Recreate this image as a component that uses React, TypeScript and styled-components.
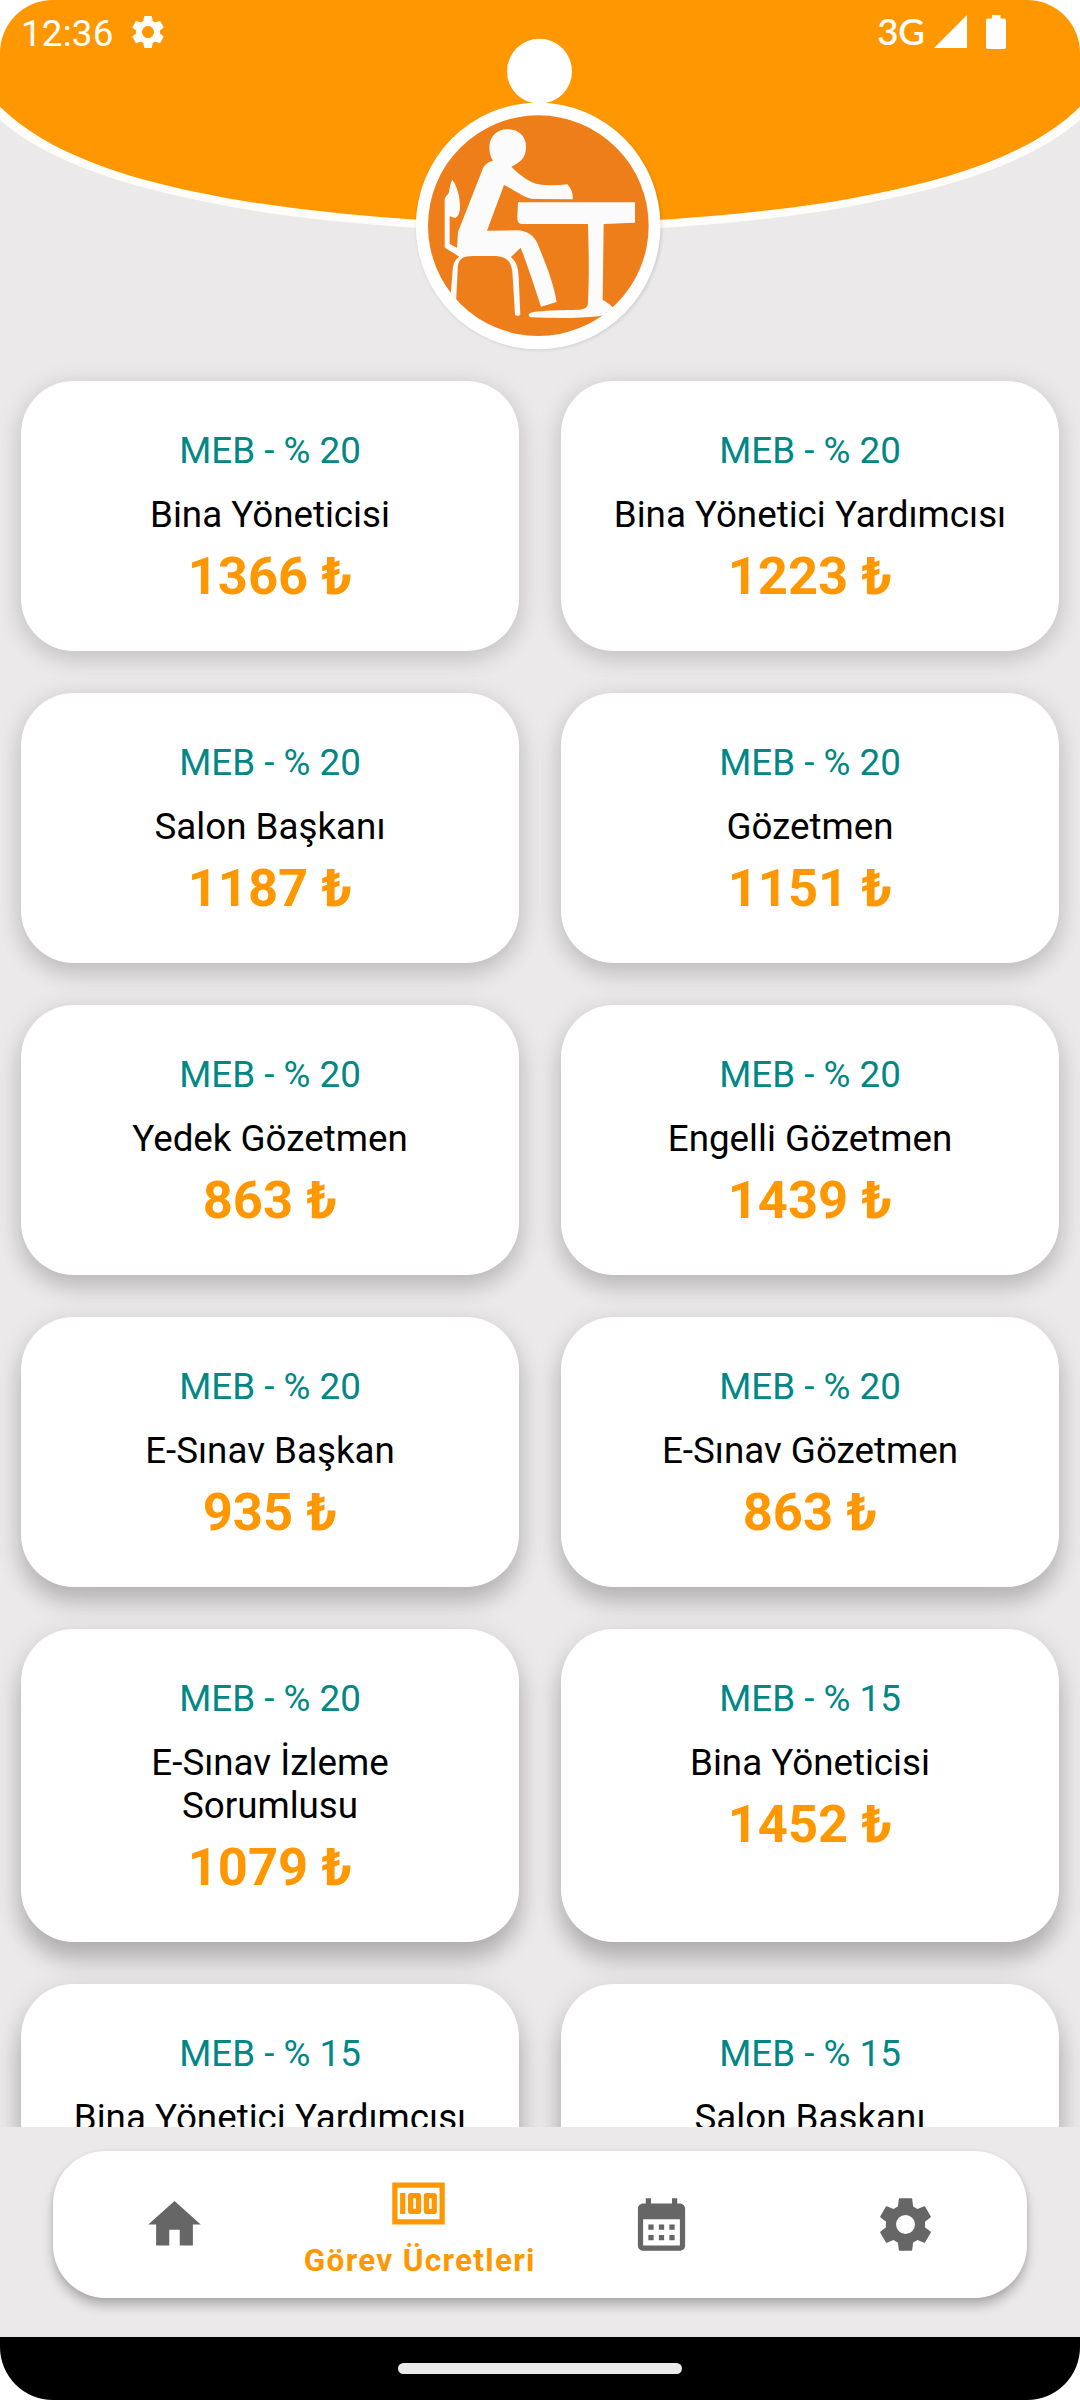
import React from "react";
import styled, { createGlobalStyle } from "styled-components";
import { MdCalendarMonth, MdHome, MdMoney, MdSettings } from "react-icons/md";

const ORANGE = "#ff9800";
const SURFACE = "#ebe9ea";

const GlobalStyle = createGlobalStyle`
  html, body { margin: 0; background: #fff; }
  * { box-sizing: border-box; }
`;

const Screen = styled.main`
  width: 1080px;
  height: 2400px;
  display: flex;
  flex-direction: column;
  overflow: hidden;
  border-radius: 53px;
  background: ${SURFACE};
  font-family: Roboto, "Noto Sans", sans-serif;
`;

const Header = styled.header`
  position: relative;
  flex: none;
  height: 350px;
`;

const HeaderArt = styled.svg`
  position: absolute;
  inset: 0;
  width: 1080px;
  height: 350px;
  overflow: visible;
`;

const StatusBar = styled.div`
  position: relative;
  display: flex;
  align-items: center;
  height: 64px;
  padding: 0 74px 0 21px;
  color: #fff;
`;

const Clock = styled.span`
  font-size: 36.75px;
  line-height: 43px;
  letter-spacing: 0.2px;
  margin-top: 2px;
`;

const StatusGear = styled(MdSettings)`
  width: 40px;
  height: 40px;
  margin-left: 14px;
`;

const StatusRight = styled.div`
  display: flex;
  align-items: center;
  margin-left: auto;
`;

const Network = styled.span`
  font-family: Lato, Roboto, sans-serif;
  font-size: 36.5px;
  font-weight: 500;
  line-height: 43px;
  margin: -2px 9px 0 0;
  -webkit-text-stroke: 0.2px currentColor;
`;

const StatusGlyph = styled.svg<{ $w: number; $gap?: number }>`
  width: ${(p) => p.$w}px;
  height: 34px;
  margin-right: ${(p) => p.$gap ?? 0}px;
  fill: currentColor;
`;

const List = styled.section`
  flex: 1;
  min-height: 0;
  overflow: hidden;
  display: grid;
  grid-template-columns: 1fr 1fr;
  grid-auto-rows: max-content;
  gap: 42px;
  padding: 31px 21px 0;
`;

const Card = styled.article<{ $row: number }>`
  display: flex;
  flex-direction: column;
  align-items: center;
  min-height: 270px;
  padding: 48px 48px 44px;
  border-radius: 52.5px;
  background: #fff;
  text-align: center;
  box-shadow:
    0 4px 28px rgba(0, 0, 0, 0.1),
    0 ${(p) => 8 + p.$row * 2.5}px 22px
      rgba(0, 0, 0, ${(p) => 0.1 + p.$row * 0.025});
`;

const Rate = styled.span`
  color: #018786;
  font-size: 36.75px;
  line-height: 43px;
`;

const Role = styled.span`
  margin-top: 21px;
  color: #000;
  font-size: 36.75px;
  line-height: 43px;
`;

const Price = styled.strong`
  margin-top: 9px;
  color: ${ORANGE};
  font-size: 52.5px;
  line-height: 62px;
  font-weight: 700;
`;

const Footer = styled.footer`
  flex: none;
  height: 210px;
  padding: 24px 53px 0;
`;

const TabBar = styled.nav`
  display: grid;
  grid-template-columns: repeat(4, 1fr);
  height: 147px;
  border-radius: 52.5px;
  background: #fff;
  box-shadow: 0 8px 11px rgba(0, 0, 0, 0.24), 0 1px 5px rgba(0, 0, 0, 0.08);
`;

const Tab = styled.button<{ $active?: boolean }>`
  display: flex;
  flex-direction: column;
  align-items: center;
  justify-content: center;
  padding: 0;
  border: 0;
  background: none;
  font-family: inherit;
  color: ${(p) => (p.$active ? ORANGE : "#666")};

  svg {
    width: 63px;
    height: 63px;
    flex: none;
  }
`;

const TabLabel = styled.span`
  margin: 7px 0 -2px;
  padding-left: 3px;
  font-size: 31.5px;
  line-height: 37px;
  font-weight: 700;
  letter-spacing: 1.3px;
  white-space: nowrap;
`;

const GestureBar = styled.div`
  flex: none;
  display: flex;
  align-items: center;
  justify-content: center;
  height: 63px;
  background: #000;
`;

const GesturePill = styled.div`
  width: 284px;
  height: 11px;
  border-radius: 6px;
  background: #ebebeb;
`;

type Fee = { rate: number; role: string; price?: number };

const fees: Fee[] = [
  { rate: 20, role: "Bina Yöneticisi", price: 1366 },
  { rate: 20, role: "Bina Yönetici Yardımcısı", price: 1223 },
  { rate: 20, role: "Salon Başkanı", price: 1187 },
  { rate: 20, role: "Gözetmen", price: 1151 },
  { rate: 20, role: "Yedek Gözetmen", price: 863 },
  { rate: 20, role: "Engelli Gözetmen", price: 1439 },
  { rate: 20, role: "E-Sınav Başkan", price: 935 },
  { rate: 20, role: "E-Sınav Gözetmen", price: 863 },
  { rate: 20, role: "E-Sınav İzleme Sorumlusu", price: 1079 },
  { rate: 15, role: "Bina Yöneticisi", price: 1452 },
  { rate: 15, role: "Bina Yönetici Yardımcısı" },
  { rate: 15, role: "Salon Başkanı" },
];

function Banner() {
  return (
    <HeaderArt viewBox="0 0 1080 350" aria-hidden>
      <defs>
        <clipPath id="badge">
          <circle cx="415" cy="617" r="332" />
        </clipPath>
        <filter id="soft" x="-10%" y="-10%" width="120%" height="120%">
          <feGaussianBlur stdDeviation="6" />
        </filter>
      </defs>
      {/* white rim, then the orange dome inside it */}
      <path
        fill="#fffdf9"
        d="M0 0V120C48 162 128 187 210 202.500C290 220 430 232 540 232C650 232 790 220 870 202.500C952 187 1032 162 1080 120V0Z"
      />
      <path
        fill={ORANGE}
        d="M0 0V106.700C48 154 128 179 210 194.700C290 211.500 430 224 540 224C650 224 790 211.500 870 194.700C952 179 1032 154 1080 106.700V0Z"
      />
      <g transform="translate(400 20) scale(.33333)">
        <circle cx="418.500" cy="154" r="97.500" fill="#fff" />
        <circle cx="418" cy="622" r="366" fill="#000" opacity=".16" filter="url(#soft)" />
        <ellipse cx="414.500" cy="618" rx="367" ry="370" fill="#fff" />
        <circle cx="415" cy="617" r="331" fill="#ee7e1a" />
        <g clipPath="url(#badge)" fill="#fbfbfb">
          {/* head, torso, arm, leg and chair */}
          <path d="M323 328C358 328 378 350 378 380C378 410 366 424 334 440C356 462 380 482 408 491C440 498 472 496 502 493C514 506 520 520 518 538L400 537C372 535 346 510 312 495L261 632L350 631C384 632 402 648 412 670C436 728 460 786 470 846L423 860C402 796 384 740 362 683L333 711C352 728 354 745 356 770L361 884C358 888 348 888 345 884L338 770C336 724 322 708 280 708L220 708C184 708 174 718 173 750L168 850L150 850L158 750C160 728 166 718 178 710L136 684C134 682 134 680 134 676V538C136 530 142 524 146 520C149 502 152 488 157 479C172 500 180 530 180 560C180 578 174 590 166 593C160 595 154 590 149 588V672L171 683L174 636L249 445C255 432 264 426 279 422C270 408 268 394 268 380C269 350 290 328 323 328Z" />
          {/* desk */}
          <path d="M354 547H705V608L611 612L608 840C620 846 630 854 640 864L610 886L596 889C530 896 460 895 392 892C384 888 384 882 392 878C430 870 480 871 520 870C550 869 564 868 564 846C568 760 566 690 564 612H366C354 610 352 604 352 590Z" />
        </g>
      </g>
    </HeaderArt>
  );
}

/* Six blunt teeth with a round hub, outline in 24-unit icon space. */
function GearIcon() {
  return (
    <svg viewBox="0 0 24 24" fill="currentColor" aria-hidden>
      <path
        fillRule="evenodd"
        d="M9.750 2H14.250Q14.500 2 14.550 2.300L14.900 5.100Q15.800 5.500 16.600 6.050L19.100 5.050Q19.350 4.950 19.500 5.200L21.600 8.850Q21.700 9.100 21.500 9.300L19.400 10.950Q19.550 12 19.400 13.050L21.500 14.700Q21.700 14.900 21.600 15.150L19.500 18.800Q19.350 19.050 19.100 18.950L16.600 17.950Q15.800 18.500 14.900 18.900L14.550 21.700Q14.500 22 14.250 22H9.750Q9.500 22 9.450 21.700L9.100 18.900Q8.200 18.500 7.400 17.950L4.900 18.950Q4.650 19.050 4.500 18.800L2.400 15.150Q2.300 14.900 2.500 14.700L4.600 13.050Q4.450 12 4.600 10.950L2.500 9.300Q2.300 9.100 2.400 8.850L4.500 5.200Q4.650 4.950 4.900 5.050L7.400 6.050Q8.200 5.500 9.100 5.100L9.450 2.300Q9.500 2 9.750 2ZM12 8.400A3.600 3.600 0 1 0 12 15.600A3.600 3.600 0 1 0 12 8.400Z"
      />
    </svg>
  );
}

export default function App() {
  return (
    <>
      <GlobalStyle />
      <Screen>
        <Header>
          <Banner />
          <StatusBar>
            <Clock>12:36</Clock>
            <StatusGear />
            <StatusRight>
              <Network>3G</Network>
              <StatusGlyph $w={33} $gap={19} viewBox="0 0 33 34">
                <path d="M33 0V33H0Z" />
              </StatusGlyph>
              <StatusGlyph $w={20} viewBox="0 0 20 34">
                <path d="M6 0H14.500V3.500H18Q20 3.500 20 5.500V32Q20 34 18 34H2Q0 34 0 32V5.500Q0 3.500 2 3.500H6Z" />
              </StatusGlyph>
            </StatusRight>
          </StatusBar>
        </Header>

        <List>
          {fees.map((fee, i) => (
            <Card key={i} $row={Math.floor(i / 2)}>
              <Rate>MEB - % {fee.rate}</Rate>
              <Role>{fee.role}</Role>
              {fee.price !== undefined && <Price>{fee.price} ₺</Price>}
            </Card>
          ))}
        </List>

        <Footer>
          <TabBar>
            <Tab aria-label="Ana Sayfa">
              <MdHome />
            </Tab>
            <Tab $active>
              <MdMoney />
              <TabLabel>Görev Ücretleri</TabLabel>
            </Tab>
            <Tab aria-label="Takvim">
              <MdCalendarMonth />
            </Tab>
            <Tab aria-label="Ayarlar">
              <GearIcon />
            </Tab>
          </TabBar>
        </Footer>

        <GestureBar>
          <GesturePill />
        </GestureBar>
      </Screen>
    </>
  );
}
